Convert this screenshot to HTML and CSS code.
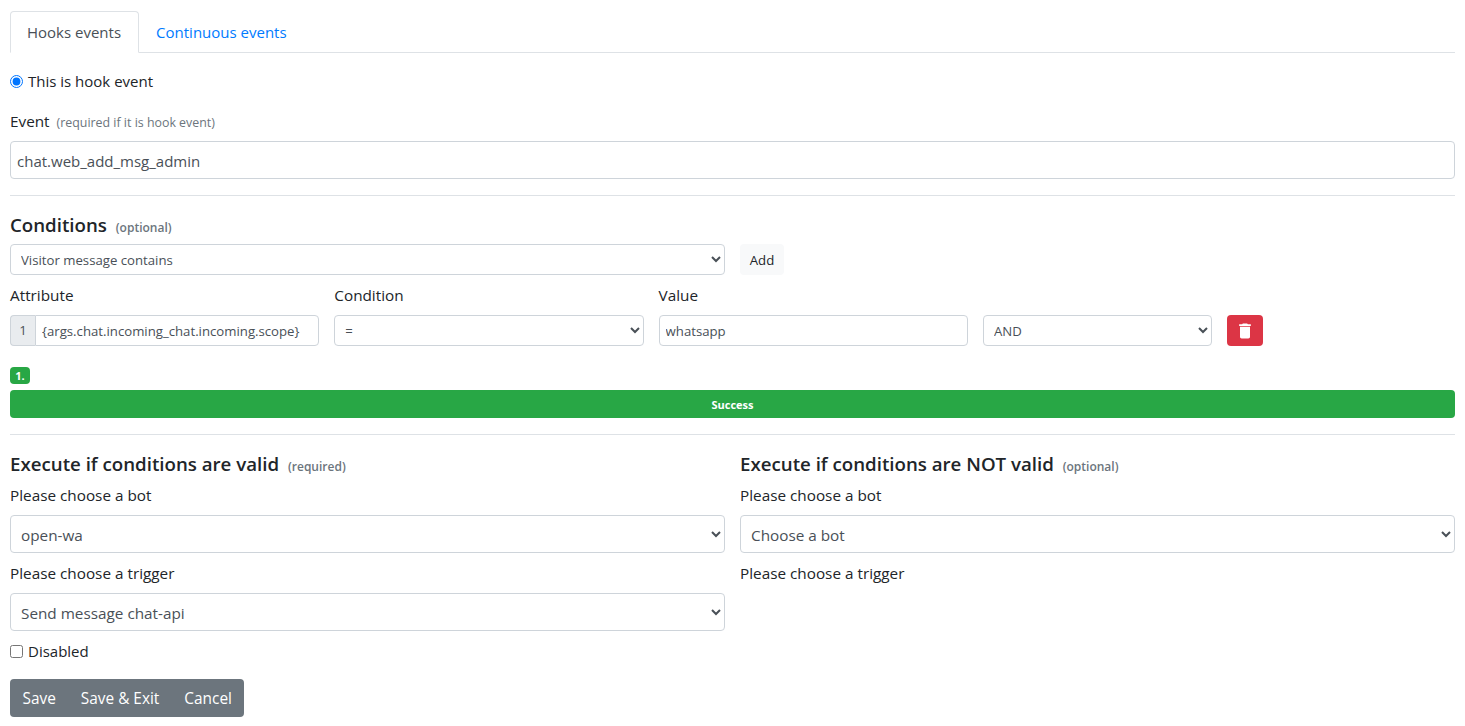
FILE: index.html
```html
<!DOCTYPE html>
<html lang="en">
<head>
  <meta charset="UTF-8">
  <title>Hooks events</title>
  <link rel="stylesheet" href="styles.css">
</head>
<body>
  <ul class="tabs">
    <li class="tab active">Hooks events</li>
    <li class="tab">Continuous events</li>
  </ul>

  <label class="radio-line">
    <input type="radio" name="kind" checked> This is hook event
  </label>

  <div class="field-label event-label">Event <small class="hint">(required if it is hook event)</small></div>
  <input type="text" class="control tall" value="chat.web_add_msg_admin">

  <hr class="rule">

  <h5 class="section-title conditions-title">Conditions <small class="note">(optional)</small></h5>
  <div class="add-row">
    <select class="control small">
      <option>Visitor message contains</option>
    </select>
    <button class="add-btn" type="button">Add</button>
  </div>

  <div class="cond-grid">
    <div class="field-label">Attribute</div>
    <div class="field-label">Condition</div>
    <div class="field-label">Value</div>
    <div></div>
    <div></div>

    <div class="input-group">
      <span class="group-num">1</span>
      <input type="text" class="control small" value="{args.chat.incoming_chat.incoming.scope}">
    </div>
    <select class="control small"><option>=</option></select>
    <input type="text" class="control small" value="whatsapp">
    <select class="control small"><option>AND</option></select>
    <button class="del-btn" type="button" aria-label="Delete">
      <svg viewBox="0 0 24 24" width="20" height="20"><path fill="#fff" d="M6 19c0 1.100.9 2 2 2h8c1.100 0 2-.9 2-2V7H6v12zM19 4h-3.500l-1-1h-5l-1 1H5v2h14V4z"/></svg>
    </button>
  </div>

  <span class="badge">1.</span>
  <div class="progress">Success</div>

  <hr class="rule">

  <div class="two-col">
    <div class="col">
      <h5 class="section-title">Execute if conditions are valid <small class="note">(required)</small></h5>
      <div class="field-label">Please choose a bot</div>
      <select class="control tall"><option>open-wa</option></select>
      <div class="field-label">Please choose a trigger</div>
      <select class="control tall"><option>Send message chat-api</option></select>
    </div>
    <div class="col">
      <h5 class="section-title">Execute if conditions are NOT valid <small class="note">(optional)</small></h5>
      <div class="field-label">Please choose a bot</div>
      <select class="control tall"><option>Choose a bot</option></select>
      <div class="field-label">Please choose a trigger</div>
    </div>
  </div>

  <label class="check-line">
    <input type="checkbox"> Disabled
  </label>

  <div class="btn-group">
    <button type="button">Save</button>
    <button type="button">Save &amp; Exit</button>
    <button type="button">Cancel</button>
  </div>
</body>
</html>
```

FILE: styles.css
```css
* {
  box-sizing: border-box;
}

body {
  margin: 0;
  padding: 11px 10px 0;
  font-family: "Open Sans", "Noto Sans", sans-serif;
  font-size: 15px;
  line-height: 22px;
  color: #212529;
  background: #fff;
}

.tabs {
  display: flex;
  margin: 0;
  padding: 0;
  list-style: none;
  height: 42px;
  border-bottom: 1px solid #dee2e6;
}

.tab {
  height: 42px;
  padding: 9px 16px;
  color: #007bff;
  border: 1px solid transparent;
  border-radius: 4px 4px 0 0;
}

.tab.active {
  padding-right: 17px;
  color: #495057;
  background: #fff;
  border-color: #dee2e6 #dee2e6 #fff;
}

.radio-line,
.check-line {
  display: flex;
  align-items: center;
  gap: 5px;
}

.radio-line {
  margin-top: 17px;
}

.radio-line input,
.check-line input {
  width: 13px;
  height: 13px;
  margin: 0;
}

.field-label {
  height: 22px;
  font-size: 15.3px;
}

.event-label {
  margin-top: 18px;
  margin-bottom: 9px;
}

.hint {
  margin-left: 3px;
  font-size: 12.4px;
  color: #6c757d;
}

.control {
  display: block;
  width: 100%;
  padding: 0 6px;
  font: inherit;
  color: #495057;
  background: #fff;
  border: 1px solid #ced4da;
  border-radius: 4px;
}

.control.tall {
  height: 38px;
  padding-top: 2px;
}

select.control.tall {
  font-size: 15.3px;
}

.control.small {
  height: 31px;
  font-size: 13.2px;
}

.rule {
  margin: 16px 0;
  border: 0;
  border-top: 1px solid #dee2e6;
}

.section-title {
  margin: 0;
  font-size: 18.7px;
  font-weight: 600;
  line-height: 26px;
}

.conditions-title {
  margin-bottom: 3px;
}

.note {
  margin-left: 4px;
  font-size: 12px;
  font-weight: 600;
  color: #6c757d;
}

.add-row {
  display: grid;
  grid-template-columns: 715px 44px;
  gap: 15px;
}

.add-btn {
  height: 31px;
  padding: 0;
  font: inherit;
  font-size: 13.2px;
  color: #212529;
  background: #f8f9fa;
  border: 0;
  border-radius: 4px;
}

.cond-grid {
  display: grid;
  grid-template-columns: 309.3px 309.3px 309.3px 229px 36px;
  column-gap: 15px;
  row-gap: 9px;
  margin-top: 9px;
}

.input-group {
  display: flex;
}

.group-num {
  flex: none;
  width: 25px;
  height: 31px;
  font-size: 13.2px;
  line-height: 29px;
  text-align: center;
  color: #495057;
  background: #e9ecef;
  border: 1px solid #ced4da;
  border-right: 0;
  border-radius: 4px 0 0 4px;
}

.input-group .control {
  min-width: 0;
  border-radius: 0 4px 4px 0;
}

.del-btn {
  display: flex;
  align-items: center;
  justify-content: center;
  height: 31px;
  padding: 0;
  background: #dc3545;
  border: 0;
  border-radius: 4px;
}

.badge {
  display: block;
  width: 20px;
  height: 17px;
  margin-top: 21px;
  font-size: 11px;
  font-weight: 700;
  line-height: 17px;
  text-align: center;
  color: #fff;
  background: #28a745;
  border-radius: 4px;
}

.progress {
  height: 28px;
  margin-top: 6px;
  font-size: 11px;
  font-weight: 700;
  line-height: 29px;
  text-align: center;
  color: #fff;
  background: #28a745;
  border-radius: 4px;
}

.two-col {
  display: grid;
  grid-template-columns: 715px 715px;
  gap: 15px;
}

.col .section-title {
  margin-bottom: 4px;
}

.col .field-label {
  margin-bottom: 9px;
}

.col .control {
  margin-bottom: 9px;
}

.btn-group {
  display: inline-flex;
  margin-top: 17px;
  background: #6c757d;
  border-radius: 4px;
}

.btn-group button {
  height: 38px;
  padding: 2px 12.5px 0;
  font: inherit;
  font-size: 15.4px;
  color: #fff;
  background: transparent;
  border: 0;
}
```
